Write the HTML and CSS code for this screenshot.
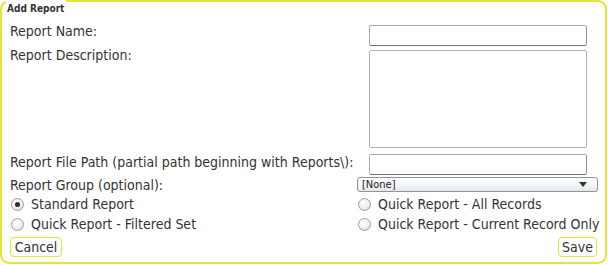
FILE: index.html
```html
<!DOCTYPE html>
<html>
<head>
<meta charset="utf-8">
<link rel="stylesheet" href="styles.css">
</head>
<body>
<div class="panel">
  <div class="title">Add Report</div>
  <div class="row r1">
    <label class="lbl l1">Report Name:</label>
    <div class="ctl"><input class="txt" type="text"></div>
  </div>
  <div class="row r2">
    <label class="lbl l2">Report Description:</label>
    <div class="ctl"><textarea class="area"></textarea></div>
  </div>
  <div class="row r3">
    <label class="lbl l1">Report File Path (partial path beginning with Reports\):</label>
    <div class="ctl"><input class="txt" type="text"></div>
  </div>
  <div class="row r4">
    <label class="lbl">Report Group (optional):</label>
    <div class="select">
      <span class="sel-text">[None]</span>
      <svg class="arrow" width="8" height="5" viewBox="0 0 8 5"><path d="M0 0H8L4 5Z" fill="#333"/></svg>
    </div>
  </div>
  <div class="row r5">
    <label class="opt"><span class="radio checked"></span>Standard Report</label>
    <label class="opt"><span class="radio"></span>Quick Report - All Records</label>
  </div>
  <div class="row r6">
    <label class="opt"><span class="radio"></span>Quick Report - Filtered Set</label>
    <label class="opt"><span class="radio"></span>Quick Report - Current Record Only</label>
  </div>
  <div class="buttons">
    <button class="btn cancel">Cancel</button>
    <button class="btn save">Save</button>
  </div>
</div>
</body>
</html>
```
FILE: styles.css
```css
html, body {
  margin: 0;
  padding: 0;
  background: #fff;
}
body {
  font-family: "DejaVu Sans Condensed", "DejaVu Sans", sans-serif;
  font-size: 14px;
  color: #333;
}
.panel {
  box-sizing: border-box;
  width: 607px;
  height: 264px;
  border: 2px solid #e6e236;
  border-radius: 9px;
  padding: 0 7px 0 8px;
}
.title {
  display: block;
  width: fit-content;
  margin: -2px 0 0 -4px;
  padding: 2px 2px 0 1px;
  background: #fff;
  font-size: 10px;
  font-weight: bold;
  line-height: 13px;
  color: #333;
}
.row {
  display: grid;
  grid-template-columns: 347px 1fr;
  align-items: start;
}
.lbl {
  display: block;
  line-height: 16px;
  white-space: nowrap;
}
.ctl {
  padding-left: 12px;
}
.r1 { margin-top: 10px; }
.r1 .lbl { margin-top: -2px; }
.r2 { margin-top: 4px; }
.r2 .lbl { margin-top: -3px; }
.r3 { margin-top: 6px; }
.r4 { margin-top: 2px; }
.r5 { margin-top: 3px; }
.r6 { margin-top: 4px; }
.txt {
  box-sizing: border-box;
  display: block;
  width: 218px;
  height: 21px;
  margin: 0;
  border: 1px solid #a3abb4;
  border-bottom-color: #6a737d;
  border-right-color: #8c949c;
  border-radius: 2px;
  background: #fff;
}
.area {
  box-sizing: border-box;
  display: block;
  width: 218px;
  height: 98px;
  margin: 0;
  border: 1px solid #aab2ba;
  border-radius: 2px;
  resize: none;
  background: #fff;
}
.select {
  box-sizing: border-box;
  width: 241px;
  height: 15px;
  border: 1px solid #8d949c;
  border-radius: 3px;
  background: linear-gradient(#ffffff, #f2f3f5 60%, #e6e8eb);
  display: flex;
  align-items: center;
  justify-content: space-between;
  padding: 0 10px 0 4px;
}
.sel-text {
  font-size: 11px;
  line-height: 13px;
  color: #222;
}
.arrow {
  display: block;
}
.opt {
  display: flex;
  align-items: center;
  line-height: 16px;
  white-space: nowrap;
}
.radio {
  box-sizing: border-box;
  width: 13px;
  height: 13px;
  border-radius: 50%;
  border: 1px solid #9a9ea3;
  background: radial-gradient(circle at 40% 35%, #ffffff 0%, #eceef0 55%, #c9cdd1 100%);
  margin: 0 7px 0 1px;
  display: flex;
  align-items: center;
  justify-content: center;
}
.radio.checked::after {
  content: "";
  width: 5px;
  height: 5px;
  border-radius: 50%;
  background: #2a2a2a;
}
.buttons {
  display: flex;
  justify-content: space-between;
  margin-top: 5px;
  padding-right: 1px;
}
.btn {
  box-sizing: border-box;
  height: 20px;
  font-family: inherit;
  font-size: 14px;
  color: #333;
  background: #fff;
  border: 1px solid #e6e236;
  border-radius: 4px;
  padding: 0 3px;
  line-height: 16px;
}
.cancel { width: 52px; }
.save { width: 39px; }
```
